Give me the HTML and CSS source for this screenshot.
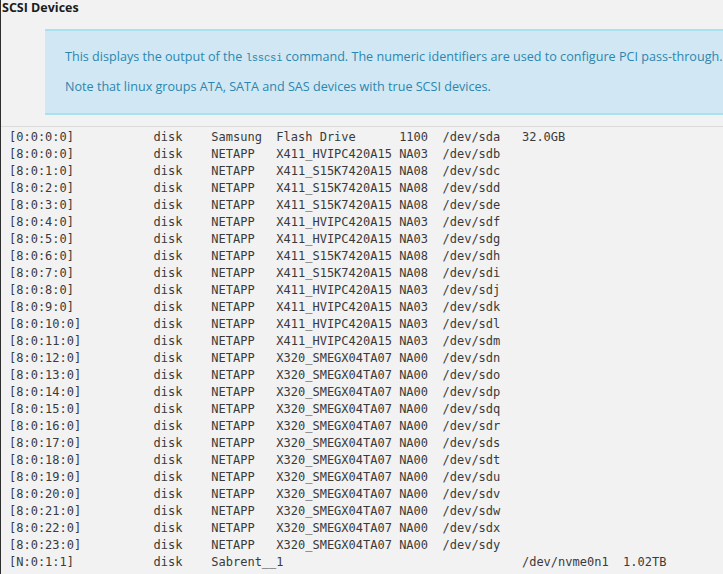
FILE: index.html
```html
<!DOCTYPE html>
<html>
<head>
<meta charset="utf-8">
<link rel="stylesheet" href="styles.css">
</head>
<body>
<div class="frame">
  <div class="title">SCSI Devices</div>
  <div class="notice">
    <p>This displays the output of the <code>lsscsi</code> command. The numeric identifiers are used to configure PCI pass-through.</p>
    <p>Note that linux groups ATA, SATA and SAS devices with true SCSI devices.</p>
  </div>
  <div class="divider"></div>
<pre class="output">[0:0:0:0]           disk    Samsung  Flash Drive      1100  /dev/sda   32.0GB
[8:0:0:0]           disk    NETAPP   X411_HVIPC420A15 NA03  /dev/sdb
[8:0:1:0]           disk    NETAPP   X411_S15K7420A15 NA08  /dev/sdc
[8:0:2:0]           disk    NETAPP   X411_S15K7420A15 NA08  /dev/sdd
[8:0:3:0]           disk    NETAPP   X411_S15K7420A15 NA08  /dev/sde
[8:0:4:0]           disk    NETAPP   X411_HVIPC420A15 NA03  /dev/sdf
[8:0:5:0]           disk    NETAPP   X411_HVIPC420A15 NA03  /dev/sdg
[8:0:6:0]           disk    NETAPP   X411_S15K7420A15 NA08  /dev/sdh
[8:0:7:0]           disk    NETAPP   X411_S15K7420A15 NA08  /dev/sdi
[8:0:8:0]           disk    NETAPP   X411_HVIPC420A15 NA03  /dev/sdj
[8:0:9:0]           disk    NETAPP   X411_HVIPC420A15 NA03  /dev/sdk
[8:0:10:0]          disk    NETAPP   X411_HVIPC420A15 NA03  /dev/sdl
[8:0:11:0]          disk    NETAPP   X411_HVIPC420A15 NA03  /dev/sdm
[8:0:12:0]          disk    NETAPP   X320_SMEGX04TA07 NA00  /dev/sdn
[8:0:13:0]          disk    NETAPP   X320_SMEGX04TA07 NA00  /dev/sdo
[8:0:14:0]          disk    NETAPP   X320_SMEGX04TA07 NA00  /dev/sdp
[8:0:15:0]          disk    NETAPP   X320_SMEGX04TA07 NA00  /dev/sdq
[8:0:16:0]          disk    NETAPP   X320_SMEGX04TA07 NA00  /dev/sdr
[8:0:17:0]          disk    NETAPP   X320_SMEGX04TA07 NA00  /dev/sds
[8:0:18:0]          disk    NETAPP   X320_SMEGX04TA07 NA00  /dev/sdt
[8:0:19:0]          disk    NETAPP   X320_SMEGX04TA07 NA00  /dev/sdu
[8:0:20:0]          disk    NETAPP   X320_SMEGX04TA07 NA00  /dev/sdv
[8:0:21:0]          disk    NETAPP   X320_SMEGX04TA07 NA00  /dev/sdw
[8:0:22:0]          disk    NETAPP   X320_SMEGX04TA07 NA00  /dev/sdx
[8:0:23:0]          disk    NETAPP   X320_SMEGX04TA07 NA00  /dev/sdy
[N:0:1:1]           disk    Sabrent__1                                 /dev/nvme0n1  1.02TB</pre>
</div>
</body>
</html>
```

FILE: styles.css
```css
html, body {
  margin: 0;
  padding: 0;
  background: #f2f2f2;
  overflow: hidden;
}

.frame {
  border-left: 1px solid #2e2e2e;
  min-height: 574px;
  box-sizing: border-box;
}

.title {
  font-family: "Open Sans", "Noto Sans", sans-serif;
  font-weight: 700;
  font-size: 12.5px;
  line-height: 16px;
  color: #1c1c1c;
  padding-left: 1px;
}

.notice {
  margin: 13px 0 11px 44px;
  background: #d1e8f4;
  border-top: 2px solid #a9e2ef;
  border-bottom: 2px solid #a9e2ef;
  padding: 16px 0 16px 20px;
  font-family: "Open Sans", "Noto Sans", sans-serif;
  font-size: 12.6px;
  color: #2b86ae;
  white-space: nowrap;
  overflow: hidden;
}

.notice p {
  margin: 0;
  line-height: 20px;
}

.notice p + p {
  margin-top: 10px;
}

.notice code {
  font-family: "Liberation Mono", monospace;
  font-size: 10.5px;
  line-height: 1;
  letter-spacing: -0.2px;
}

.divider {
  height: 1px;
  background: #dcdcdc;
}

.output {
  margin: 2px 0 0 0;
  padding-left: 8px;
  font-family: "DejaVu Sans Mono", monospace;
  font-size: 12px;
  line-height: 17px;
  color: #3a3a3a;
}
```
